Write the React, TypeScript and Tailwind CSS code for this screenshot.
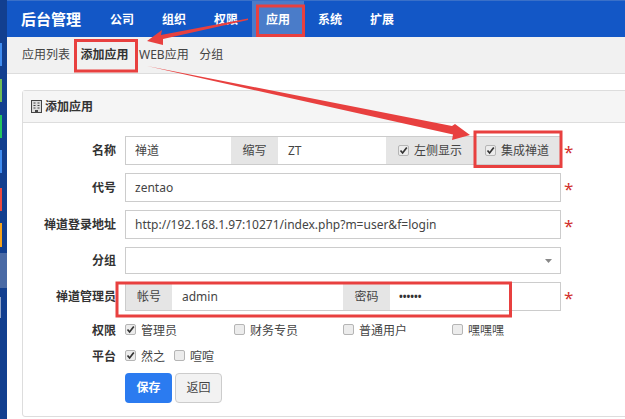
import React from "react";

const font = { fontFamily: '"Noto Sans", "Noto Sans CJK SC", sans-serif' };

function Box({ checked, lift }: { checked?: boolean; lift?: boolean }) {
  return (
    <span className={`w-[11px] h-[11px] rounded-[2px] border border-[#b5b5b5] bg-[#ececec] flex items-center justify-center shrink-0 ${lift ? "mb-[3px]" : ""}`}>
      {checked && (
        <svg width="9" height="9" viewBox="0 0 9 9">
          <path d="M1.5 4.5 L3.6 7 L7.8 1.5" fill="none" stroke="#333" strokeWidth="1.7" />
        </svg>
      )}
    </span>
  );
}

function Star() {
  return <span className="w-[14px] pl-[3px] pt-[2px] text-[17px] leading-none text-[#d2322d]">*</span>;
}

function Label({ children }: { children: React.ReactNode }) {
  return <div className="w-[93px] shrink-0 text-right font-bold text-[12px] text-[#333] mr-[9px] whitespace-nowrap">{children}</div>;
}

function Addon({ w, children }: { w: string; children: React.ReactNode }) {
  return <div className={`${w} h-full shrink-0 bg-[#e5e5e5] flex items-center justify-center text-[12px] text-[#444]`}>{children}</div>;
}

function Check({ w, checked, children }: { w: string; checked?: boolean; children: React.ReactNode }) {
  return (
    <div className={`${w} flex items-center gap-[5px] text-[12px] text-[#444] shrink-0`}>
      <Box checked={checked} lift />
      <span>{children}</span>
    </div>
  );
}

export default function App() {
  const nav = ["公司", "组织", "权限", "应用", "系统", "扩展"];
  return (
    <div className="relative w-[625px] h-[419px] overflow-hidden flex bg-white" style={font}>
      <div className="w-[7px] shrink-0 h-full bg-[#123f8f] flex flex-col">
        <div className="w-[2px] h-[23px] mt-[43px] bg-[#3f8cf0]" />
        <div className="w-[2px] h-[23px] mt-[13px] bg-[#6dbb55]" />
        <div className="w-[2px] h-[23px] mt-[13px] bg-[#22c55e]" />
        <div className="w-[2px] h-[23px] mt-[12px] bg-[#3f8cf0]" />
        <div className="w-[2px] h-[23px] mt-[15px] bg-[#ea4a3f]" />
        <div className="w-[2px] h-[24px] mt-[12px] bg-[#f5a21a]" />
        <div className="w-full h-[35px] mt-[6px] bg-[#4a6aa5]" />
        <div className="w-[1px] h-[21px] mt-[9px] bg-[#8fa3c8]" />
      </div>

      <div className="flex-1 min-w-0 flex flex-col">
        <div className="h-[1px] bg-[#3a70c8]" />
        <div className="h-[36px] bg-[#1357c6] flex items-center text-white shrink-0">
          <div className="w-[89px] pl-[14px] pt-[1px] text-[15px] font-bold whitespace-nowrap">后台管理</div>
          {nav.map((n) => (
            <div
              key={n}
              className={`w-[52px] h-full pt-[1px] flex items-center justify-center text-[12px] font-bold ${n === "应用" ? "bg-[#4a7cc9]" : ""}`}
            >
              {n}
            </div>
          ))}
        </div>
        <div className="h-[37px] shrink-0 bg-[#f1f1f1] border-b border-[#ddd] flex items-center pl-[15px] gap-[10.5px] text-[12px] text-[#444]">
          <span>应用列表</span>
          <span className="font-bold text-[#333]">添加应用</span>
          <span>WEB应用</span>
          <span>分组</span>
        </div>

        <div className="w-[640px] ml-[15px] mt-[16px] border border-[#ddd] rounded-[3px] h-[327px] shrink-0">
          <div className="h-[32px] bg-[#f5f5f5] border-b border-[#ddd] flex items-center pl-[8px] gap-[3px]">
            <svg width="11" height="13" viewBox="0 0 11 13">
              <rect x="0.5" y="0.5" width="10" height="12" fill="#ddd" stroke="#444" />
              <path d="M2.5 3h2M6.5 3h2M2.5 5.5h2M6.5 5.5h2M2.5 8h2M6.5 8h2" stroke="#444" />
              <rect x="4" y="10" width="3" height="3" fill="#444" />
            </svg>
            <span className="text-[12px] font-bold text-[#333]">添加应用</span>
          </div>

          <div className="pt-[13px] flex flex-col text-[12px] text-[#444]">
            <div className="flex items-center h-[29px]">
              <Label>名称</Label>
              <div className="w-[436px] h-full flex items-center border border-[#ccc] border-r-0">
                <div className="w-[105px] pl-[9px]">禅道</div>
                <Addon w="w-[47px]">缩写</Addon>
                <div className="w-[108px] pl-[10px]">ZT</div>
                <div className="w-[88px] h-full bg-[#e5e5e5] flex items-center gap-[5px] pl-[12px]">
                  <Box checked />
                  <span>左侧显示</span>
                </div>
                <div className="flex-1 h-full bg-[#e5e5e5] border-l border-[#f5f5f5] flex items-center gap-[5px] pl-[10px]">
                  <Box checked />
                  <span>集成禅道</span>
                </div>
              </div>
              <Star />
            </div>

            <div className="flex items-center h-[29px] mt-[8px]">
              <Label>代号</Label>
              <div className="w-[436px] h-full flex items-center border border-[#ccc] pl-[9px]">zentao</div>
              <Star />
            </div>

            <div className="flex items-center h-[29px] mt-[8px]">
              <Label>禅道登录地址</Label>
              <div className="w-[436px] h-full flex items-center border border-[#ccc] pl-[9px] whitespace-nowrap">
                http://192.168.1.97:10271/index.php?m=user&amp;f=login
              </div>
              <Star />
            </div>

            <div className="flex items-center h-[27px] mt-[8px]">
              <Label>分组</Label>
              <div className="w-[436px] h-full flex items-center justify-end border border-[#ccc] pr-[8px]">
                <svg width="7" height="4" viewBox="0 0 7 4">
                  <path d="M0 0H7L3.5 4Z" fill="#888" />
                </svg>
              </div>
            </div>

            <div className="flex items-center h-[29px] mt-[8px]">
              <Label>禅道管理员</Label>
              <div className="w-[436px] h-full flex items-center border border-[#ccc]">
                <Addon w="w-[46px]">帐号</Addon>
                <div className="w-[171px] pl-[10px]">admin</div>
                <Addon w="w-[47px]">密码</Addon>
                <div className="pl-[9px] text-[10px] font-bold text-[#333]">••••••</div>
              </div>
              <Star />
            </div>

            <div className="flex items-center h-[20px] mt-[10px]">
              <Label>权限</Label>
              <Check w="w-[109px]" checked>管理员</Check>
              <Check w="w-[109px]">财务专员</Check>
              <Check w="w-[109px]">普通用户</Check>
              <Check w="w-[109px]">嘿嘿嘿</Check>
            </div>

            <div className="flex items-center h-[20px] mt-[6px]">
              <Label>平台</Label>
              <Check w="w-[49px]" checked>然之</Check>
              <Check w="w-[60px]">喧喧</Check>
            </div>

            <div className="flex items-center mt-[6px] pl-[102px] gap-[3px]">
              <div className="w-[47px] h-[30px] rounded-[4px] bg-[#2b7bf0] text-white font-bold flex items-center justify-center">保存</div>
              <div className="w-[47px] h-[30px] rounded-[4px] bg-[#f2f2f2] border border-[#ccc] text-[#444] flex items-center justify-center">返回</div>
            </div>
          </div>
        </div>
      </div>

      <svg className="absolute inset-0 pointer-events-none" width="625" height="419" viewBox="0 0 625 419">
        <g fill="none" stroke="#e8403f" strokeWidth="3">
          <rect x="257.5" y="6" width="46" height="29.5" />
          <rect x="75.5" y="40.5" width="61" height="30.5" />
          <rect x="475" y="132" width="86" height="34.5" />
          <rect x="117" y="283" width="393.5" height="33" />
        </g>
        <path d="M147 41 L162 30 L161 35 L248 18.5 L248 20 L163 39 L163 45 Z" fill="#e8403f" />
        <path d="M147 66 L452 126 L455 124 L470 135 L452 140 L453 134.5 Z" fill="#e8403f" />
      </svg>
    </div>
  );
}
